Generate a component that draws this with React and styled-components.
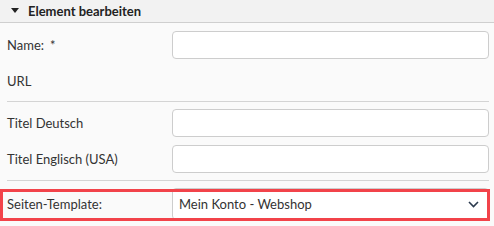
import React from 'react';
import styled, { createGlobalStyle } from 'styled-components';

const GlobalStyle = createGlobalStyle`
	html, body {
		margin: 0;
		padding: 0;
		background: #fafafa;
	}
	body {
		font-family: Lato, "Open Sans", Arial, sans-serif;
		color: #333;
		font-size: 13px;
	}
`;

const Panel = styled.div`
	width: 494px;
	height: 226px;
	overflow: hidden;
	background: #fafafa;
`;

const Header = styled.div`
	height: 23px;
	box-sizing: border-box;
	background: #f2f2f2;
	border-bottom: 1px solid #cfcfcf;
	display: flex;
	align-items: center;
	gap: 9px;
	padding: 0 0 1px 11px;
	font-weight: 700;
	font-size: 13px;
	color: #222;
`;

const Caret = styled.span`
	width: 0;
	height: 0;
	border-left: 4px solid transparent;
	border-right: 4px solid transparent;
	border-top: 5px solid #222;
`;

const Body = styled.div`
	padding: 0 5px 0 7px;
`;

const Section = styled.div`
	display: flex;
	flex-direction: column;
	gap: 8px;
	padding: ${props => props.pad || '8px 0'};
	border-bottom: ${props => (props.last ? 'none' : '1px solid #d4d4d4')};
`;

const Row = styled.div`
	display: grid;
	grid-template-columns: 165px 1fr;
	align-items: center;
	min-height: 28px;
	position: relative;
	${props =>
		props.marked &&
		`
		&::after {
			content: '';
			position: absolute;
			left: -7px;
			right: -1px;
			top: 1px;
			bottom: -1px;
			border: 3px solid #f2434a;
			pointer-events: none;
		}
	`}
`;

const Label = styled.label`
	font-size: 13px;
	color: #333;
	line-height: 16px;
`;

const Required = styled.span`
	margin-left: 6px;
`;

const Input = styled.div`
	height: 28px;
	box-sizing: border-box;
	background: #fff;
	border: 1px solid #cdcdcd;
	border-radius: 4px;
`;

const Select = styled(Input)`
	display: flex;
	align-items: center;
	justify-content: space-between;
	padding: 0 9px 0 6px;
	height: 32px;
	font-size: 13px;
	color: #333;
`;

const Chevron = () => (
	<svg width="11" height="7" viewBox="0 0 11 7">
		<path d="M1 1l4.5 4.5L10 1" fill="none" stroke="#2b3a4e" strokeWidth="1.6" />
	</svg>
);

export default function App() {
	return (
		<Panel>
			<GlobalStyle />
			<Header>
				<Caret />
				Element bearbeiten
			</Header>
			<Body>
				<Section pad="8px 0 6px">
					<Row>
						<Label>
							Name:<Required>*</Required>
						</Label>
						<Input />
					</Row>
					<Row>
						<Label>URL</Label>
					</Row>
				</Section>
				<Section pad="7px 0 7px">
					<Row>
						<Label>Titel Deutsch</Label>
						<Input />
					</Row>
					<Row>
						<Label>Titel Englisch (USA)</Label>
						<Input />
					</Row>
				</Section>
				<Section pad="7px 0 0" last>
					<Row marked>
						<Label>Seiten-Template:</Label>
						<Select>
							Mein Konto - Webshop
							<Chevron />
						</Select>
					</Row>
				</Section>
			</Body>
		</Panel>
	);
}
